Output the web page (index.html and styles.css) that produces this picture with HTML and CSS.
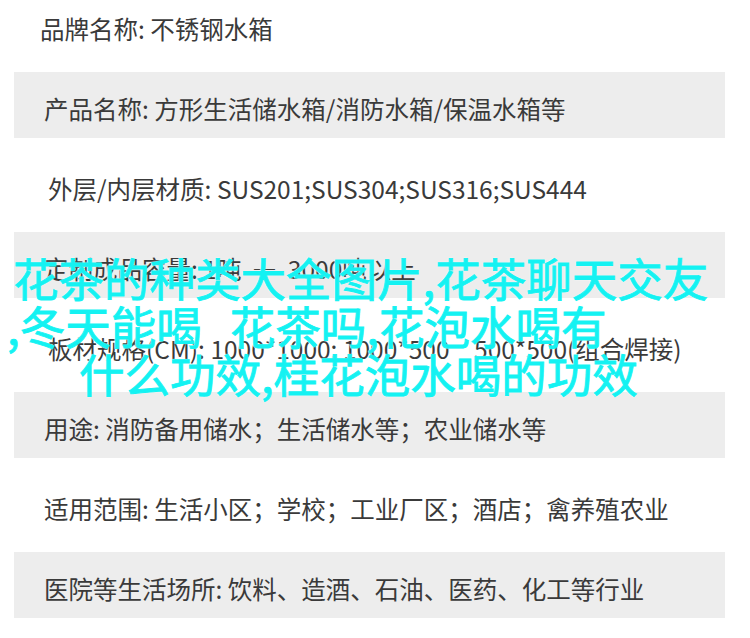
FILE: index.html
```html
<!DOCTYPE html>
<html lang="zh-CN">
<head>
    <meta charset="UTF-8">
    <meta name="viewport" content="width=device-width, initial-scale=1.0">
    <title>不锈钢水箱 参数</title>
    <link rel="stylesheet" href="styles.css">
</head>
<body>
    <div class="page">
        <div class="sheet">
            <div class="row nudge-left">品牌名称: 不锈钢水箱</div>
            <div class="row shaded">产品名称: 方形生活储水箱/消防水箱/保温水箱等</div>
            <div class="row nudge-right">外层/内层材质: SUS201;SUS304;SUS316;SUS444</div>
            <div class="row shaded">定制成品容量: 1吨&nbsp;&nbsp;—&nbsp;&nbsp;3000吨以上</div>
            <div class="row nudge-right">板材规格(CM): 1000*1000:&nbsp;1000*500&emsp;500*500(组合焊接)</div>
            <div class="row shaded">用途: 消防备用储水；生活储水等；农业储水等</div>
            <div class="row">适用范围: 生活小区；学校；工业厂区；酒店；禽养殖农业</div>
            <div class="row shaded">医院等生活场所: 饮料、造酒、石油、医药、化工等行业</div>
            <div class="row"></div>
        </div>

        <div class="caption">
            <span class="line first">花茶的种类大全图片,花茶聊天交友</span>
            <span class="line second">,冬天能喝 花茶吗,花泡水喝有</span>
            <span class="line third">什么功效,桂花泡水喝的功效</span>
        </div>
    </div>
</body>
</html>
```

FILE: styles.css
```css
:root {
    --text-color: #3a3a3a;
    --band-color: #ededed;
    --caption-color: #14f2f2;
}
body {
    margin: 0;
    background: #fff;
    font-family: "Noto Sans CJK SC", "Noto Sans", sans-serif;
    color: var(--text-color);
}
.page {
    position: relative;
    width: 750px;
    height: 638px;
    overflow: hidden;
}
.sheet {
    display: flex;
    flex-direction: column;
    gap: 14px;
    margin-top: -8px;
    padding: 0 25px 0 14px;
}
.row {
    display: flex;
    align-items: center;
    height: 66px;
    box-sizing: border-box;
    padding: 6px 0 0 30px;
    font-size: 24.5px;
    white-space: pre;
}
.row.shaded {
    background: var(--band-color);
}
.row.nudge-left {
    padding-left: 26px;
}
.row.nudge-right {
    padding-left: 34px;
}
.caption {
    position: absolute;
    left: 0;
    top: 253px;
    font-size: 45.5px;
    line-height: 48px;
    color: var(--caption-color);
    -webkit-text-stroke: 0.9px var(--caption-color);
    text-shadow: 0 0 2px #fff, 0 0 1px #fff;
    white-space: nowrap;
}
.line {
    display: block;
}
.line.first {
    padding-left: 13px;
}
.line.second {
    padding-left: 7px;
    word-spacing: 18px;
}
.line.third {
    padding-left: 79px;
}
```
